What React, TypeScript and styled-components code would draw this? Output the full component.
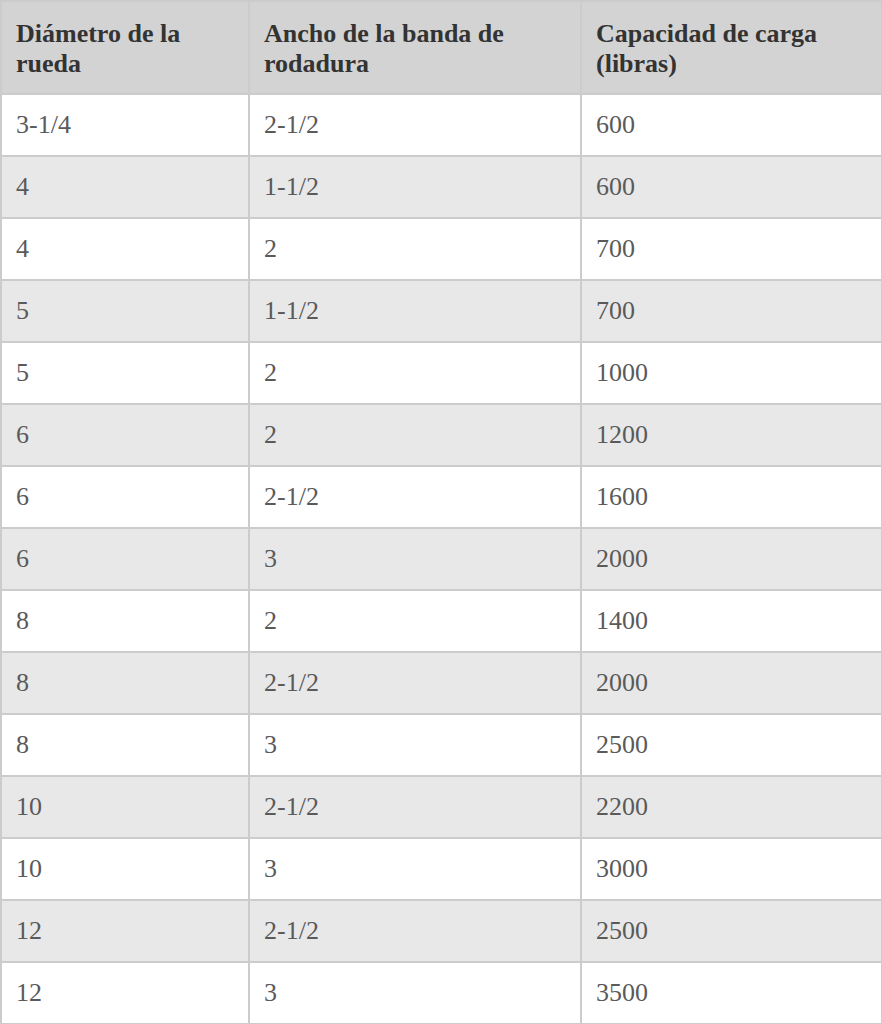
import React from "react";
import styled, { createGlobalStyle } from "styled-components";

const Global = createGlobalStyle`
  html, body { margin: 0; padding: 0; background: #ffffff; }
`;

const Table = styled.table`
  width: 881px;
  border-collapse: collapse;
  table-layout: fixed;
  font-family: "Liberation Serif", "Times New Roman", serif;
  font-size: 26px;
  border: 2px solid #cccccc;
`;

const HeadRow = styled.tr`
  height: 93px;
  background: #d3d3d3;
`;

const Th = styled.th`
  text-align: left;
  vertical-align: middle;
  font-weight: bold;
  color: #333333;
  line-height: 30px;
  padding: 2px 14px 0 14px;
  border: 2px solid #cccccc;
`;

const Row = styled.tr<{ $alt: boolean }>`
  height: 62px;
  background: ${(p) => (p.$alt ? "#e8e8e8" : "#ffffff")};
`;

const Td = styled.td`
  color: #5a5a5a;
  line-height: 30px;
  padding: 0 14px 0 14px;
  vertical-align: middle;
  border: 2px solid #cccccc;
`;

const rows: [string, string, string][] = [
  ["3-1/4", "2-1/2", "600"],
  ["4", "1-1/2", "600"],
  ["4", "2", "700"],
  ["5", "1-1/2", "700"],
  ["5", "2", "1000"],
  ["6", "2", "1200"],
  ["6", "2-1/2", "1600"],
  ["6", "3", "2000"],
  ["8", "2", "1400"],
  ["8", "2-1/2", "2000"],
  ["8", "3", "2500"],
  ["10", "2-1/2", "2200"],
  ["10", "3", "3000"],
  ["12", "2-1/2", "2500"],
  ["12", "3", "3500"],
];

export default function App() {
  return (
    <>
      <Global />
      <Table>
        <colgroup>
          <col style={{ width: 248 }} />
          <col style={{ width: 332 }} />
          <col style={{ width: 301 }} />
        </colgroup>
        <thead>
          <HeadRow>
            <Th>Diámetro de la rueda</Th>
            <Th>Ancho de la banda de rodadura</Th>
            <Th>Capacidad de carga (libras)</Th>
          </HeadRow>
        </thead>
        <tbody>
          {rows.map((r, i) => (
            <Row key={i} $alt={i % 2 === 1}>
              <Td>{r[0]}</Td>
              <Td>{r[1]}</Td>
              <Td>{r[2]}</Td>
            </Row>
          ))}
        </tbody>
      </Table>
    </>
  );
}
